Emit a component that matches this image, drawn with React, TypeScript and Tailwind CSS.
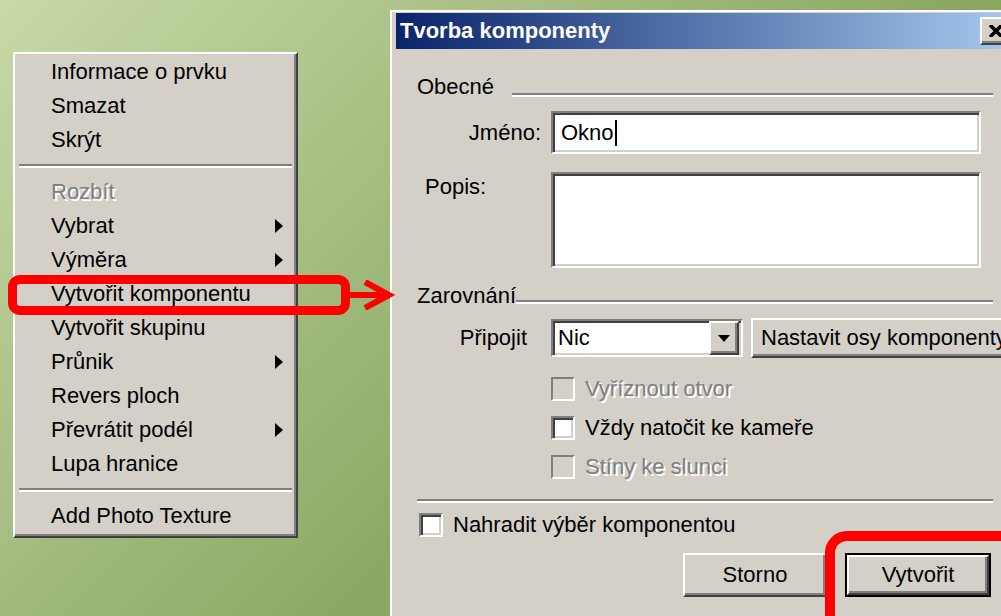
import type { ReactNode } from "react";

type MenuEntry = { label: string; submenu?: boolean; disabled?: boolean } | "sep";

const menuEntries: MenuEntry[] = [
  { label: "Informace o prvku" },
  { label: "Smazat" },
  { label: "Skrýt" },
  "sep",
  { label: "Rozbít", disabled: true },
  { label: "Vybrat", submenu: true },
  { label: "Výměra", submenu: true },
  { label: "Vytvořit komponentu" },
  { label: "Vytvořit skupinu" },
  { label: "Průnik", submenu: true },
  { label: "Revers ploch" },
  { label: "Převrátit podél", submenu: true },
  { label: "Lupa hranice" },
  "sep",
  { label: "Add Photo Texture" },
];

function SubmenuArrow() {
  return (
    <svg width="8" height="14" viewBox="0 0 8 14">
      <path d="M0 0 L8 7 L0 14 Z" fill="#000" />
    </svg>
  );
}

function Etched({ className = "" }: { className?: string }) {
  return <div className={`h-[4px] border-t-2 border-b-2 border-t-[#808080] border-b-white ${className}`} />;
}

function ContextMenu() {
  return (
    <div className="absolute left-[13px] top-[52px] w-[285px] border-2 border-t-white border-l-white border-r-[#404040] border-b-[#404040] bg-[#d4d0c8] pt-[1px] pb-[3px] shadow-[inset_-2px_-2px_0_#808080]">
      {menuEntries.map((entry, i) =>
        entry === "sep" ? (
          <div key={i} className="flex h-[18px] items-center px-[4px]">
            <Etched className="w-full" />
          </div>
        ) : (
          <div key={i} className="flex h-[34px] items-center justify-between pl-[36px] pr-[13px]">
            <span
              className={
                entry.disabled ? "text-[#808080] [text-shadow:2px_2px_0_#fff]" : "text-black"
              }
            >
              {entry.label}
            </span>
            {entry.submenu ? <SubmenuArrow /> : null}
          </div>
        )
      )}
    </div>
  );
}

function RaisedButton({ className = "", children }: { className?: string; children?: ReactNode }) {
  return (
    <div
      className={`flex items-center border-2 border-t-white border-l-white border-r-[#404040] border-b-[#404040] bg-[#d4d0c8] shadow-[inset_-2px_-2px_0_#808080] ${className}`}
    >
      {children}
    </div>
  );
}

function CheckBox({ label, disabled }: { label: string; disabled?: boolean }) {
  return (
    <div className="flex h-[24px] items-center gap-[10px]">
      {disabled ? (
        <div className="h-[24px] w-[24px] shrink-0 border-2 border-t-[#808080] border-l-[#808080] border-r-white border-b-white bg-[#d4d0c8]" />
      ) : (
        <div className="h-[24px] w-[24px] shrink-0 border-2 border-t-[#808080] border-l-[#808080] border-r-white border-b-white bg-white shadow-[inset_2px_2px_0_#404040,inset_-2px_-2px_0_#d4d0c8]" />
      )}
      <span className={disabled ? "text-[#808080] [text-shadow:2px_2px_0_#fff]" : "text-black"}>{label}</span>
    </div>
  );
}

const sunken =
  "border-2 border-t-[#808080] border-l-[#808080] border-r-white border-b-white bg-white shadow-[inset_2px_2px_0_#404040,inset_-2px_-2px_0_#d4d0c8]";

function ComponentDialog() {
  return (
    <div className="absolute left-[390px] top-[10px] h-[640px] w-[630px] border-t-2 border-l-2 border-t-white border-l-white bg-[#d4d0c8] pl-[4px] pr-[4px] pt-[1px]">
      <div className="flex h-[36px] items-center justify-between bg-[linear-gradient(90deg,#0a246a,#a6caf0)] pl-[4px] pr-[4px]">
        <span className="font-bold text-white">Tvorba komponenty</span>
        <RaisedButton className="h-[28px] w-[32px] justify-center">
          <svg width="14" height="12" viewBox="0 0 14 12">
            <path d="M1 0 L13 12 M13 0 L1 12" stroke="#000" strokeWidth="3.5" />
          </svg>
        </RaisedButton>
      </div>

      <div className="flex flex-col pl-[21px] pr-[23px] pt-[25px]">
        <div className="flex h-[26px] items-end">
          <span>Obecné</span>
          <Etched className="mb-[3px] ml-[18px] flex-1" />
        </div>

        <div className="mt-[11px] flex items-center">
          <div className="w-[134px] shrink-0 pr-[10px] text-right">Jméno:</div>
          <div className={`flex h-[43px] w-[430px] shrink-0 items-center pl-[8px] ${sunken}`}>
            <span>Okno</span>
            <span className="ml-[1px] h-[26px] w-[2px] bg-black" />
          </div>
        </div>

        <div className="mt-[18px] flex items-start">
          <div className="w-[134px] shrink-0 pl-[8px] pt-[2px]">Popis:</div>
          <div className={`h-[96px] w-[430px] shrink-0 ${sunken}`} />
        </div>

        <div className="mt-[15px] flex h-[26px] items-end">
          <span>Zarovnání</span>
          <Etched className="mb-[5px] flex-1" />
        </div>

        <div className="mt-[9px] flex h-[40px] items-center">
          <div className="w-[134px] shrink-0 pr-[24px] text-right">Připojit</div>
          <div className={`flex h-[38px] w-[192px] shrink-0 items-center justify-between pl-[5px] pr-[2px] ${sunken}`}>
            <span>Nic</span>
            <RaisedButton className="h-[34px] w-[30px] justify-center">
              <svg width="12" height="7" viewBox="0 0 12 7">
                <path d="M0 0 L12 0 L6 7 Z" fill="#000" />
              </svg>
            </RaisedButton>
          </div>
          <RaisedButton className="ml-[8px] h-[40px] w-[270px] shrink-0 pl-[8px]">
            <span className="whitespace-nowrap">Nastavit osy komponenty</span>
          </RaisedButton>
        </div>

        <div className="ml-[134px] mt-[19px] flex flex-col gap-[15px]">
          <CheckBox label="Vyříznout otvor" disabled />
          <CheckBox label="Vždy natočit ke kameře" />
          <CheckBox label="Stíny ke slunci" disabled />
        </div>

        <Etched className="mt-[20px] w-full" />

        <div className="mt-[10px] pl-[2px]">
          <CheckBox label="Nahradit výběr komponentou" />
        </div>

        <div className="mt-[16px] flex justify-end gap-[18px] pr-[2px]">
          <RaisedButton className="h-[44px] w-[144px] justify-center">Storno</RaisedButton>
          <div className="flex h-[44px] w-[146px] border-2 border-black">
            <RaisedButton className="flex-1 justify-center">Vytvořit</RaisedButton>
          </div>
        </div>
      </div>
    </div>
  );
}

export default function App() {
  return (
    <div className="relative h-[616px] w-[1001px] overflow-hidden bg-[linear-gradient(135deg,#c8d9a8_0%,#8aa862_60%,#7a9a50_100%)] font-['Liberation_Sans',Arial,sans-serif] text-[22px] leading-[26px] text-black">
      <ContextMenu />
      <ComponentDialog />

      {/* red callouts */}
      <div className="absolute left-[8px] top-[275px] h-[40px] w-[342px] rounded-[12px] border-[9px] border-[#ff0000]" />
      <svg className="absolute left-[346px] top-[280px]" width="50" height="30" viewBox="0 0 50 30">
        <path d="M0 15 L42 15" stroke="#ff0000" strokeWidth="6" />
        <path d="M19 2 L43 15 L19 28" stroke="#ff0000" strokeWidth="6" fill="none" />
      </svg>
      <div className="absolute left-[825px] top-[531px] h-[120px] w-[220px] rounded-[22px] border-[10px] border-[#ff0000]" />
    </div>
  );
}
